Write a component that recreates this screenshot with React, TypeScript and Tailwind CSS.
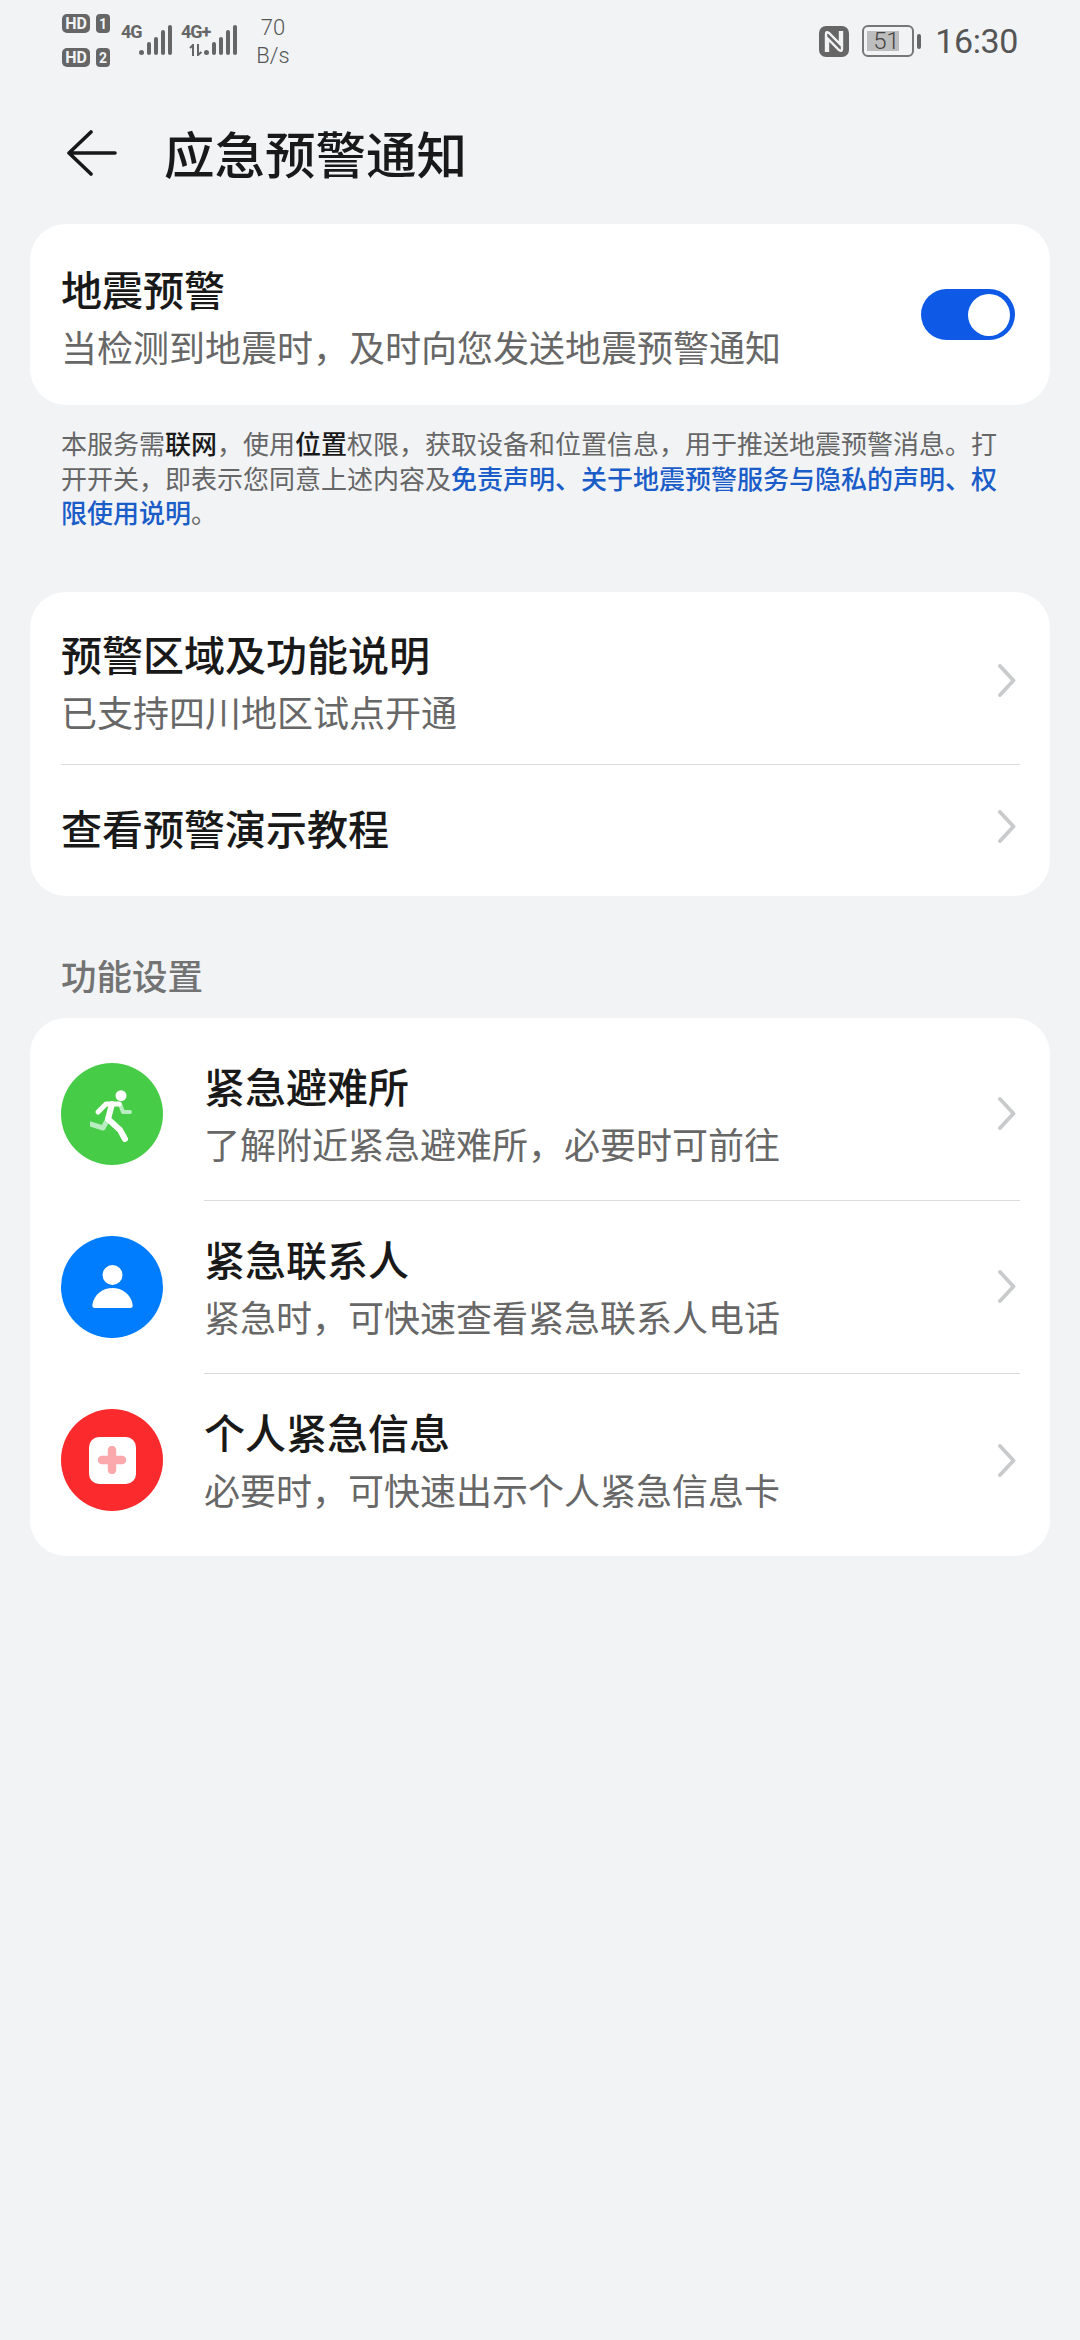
import React from 'react';

const cjk = 'font-["Noto_Sans_CJK_SC","Noto_Sans",sans-serif]';

function Chevron() {
  return (
    <svg width="18" height="33" viewBox="0 0 18 33" fill="none" className="mr-[4px] shrink-0">
      <path d="M2 2 L15.5 16.5 L2 31" stroke="#c9cacb" strokeWidth="3.8" strokeLinecap="round" strokeLinejoin="round" />
    </svg>
  );
}

function Bars() {
  return (
    <svg width="33" height="31" viewBox="0 0 33 31" fill="#666" className="mt-[4px] shrink-0">
      <circle cx="2.5" cy="27.5" r="2.5" />
      <rect x="8" y="17" width="4" height="13" rx="2" />
      <rect x="15" y="12" width="4" height="18" rx="2" />
      <rect x="22" y="5" width="4" height="25" rx="2" />
      <rect x="29" y="0" width="4" height="30" rx="2" />
    </svg>
  );
}

function SimBadge({ n }: { n: string }) {
  return (
    <div className="flex items-center gap-[6px]">
      <span className="flex h-[19px] w-[28px] items-center justify-center rounded-[5px] bg-[#666] font-['Roboto',sans-serif] text-[16px] leading-none font-bold text-[#f1f3f5]">HD</span>
      <span className="flex h-[19px] w-[14px] items-center justify-center rounded-[4px] bg-[#666] font-['Roboto',sans-serif] text-[14px] leading-none font-bold text-[#f1f3f5]">{n}</span>
    </div>
  );
}

function StatusBar() {
  return (
    <div className="flex h-[80px] items-start pr-[62px] pl-[62px] text-[#666]">
      <div className="mt-[14px] flex flex-col gap-[15px]">
        <SimBadge n="1" />
        <SimBadge n="2" />
      </div>
      <div className="mt-[21px] ml-[11px] flex items-start">
        <span className="mt-[1px] w-[18px] font-['Roboto',sans-serif] text-[18px] leading-[20px] font-bold tracking-[-1px] text-[#666]">4G</span>
        <Bars />
      </div>
      <div className="relative mt-[21px] ml-[9px] flex items-start">
        <span className="mt-[1px] w-[23px] font-['Roboto',sans-serif] text-[18px] leading-[20px] font-bold tracking-[-1px] whitespace-nowrap text-[#666]">4G+</span>
        <Bars />
        <svg width="14" height="12" viewBox="0 0 14 12" className="absolute top-[23px] left-[8px]" fill="none" stroke="#666" strokeWidth="2">
          <path d="M4 12V1L1 4" />
          <path d="M9 0V11L12.5 8" />
        </svg>
      </div>
      <div className="mt-[14px] ml-[19px] w-[34px] text-center font-['Roboto',sans-serif] text-[22px] leading-[28px] font-light text-[#555]">
        <div>70</div>
        <div>B/s</div>
      </div>
      <div className="ml-auto flex items-center pt-[24px]">
        <svg width="30" height="31" viewBox="0 0 30 31">
          <rect width="30" height="31" rx="7" fill="#666" />
          <path d="M7 26V8Q7 5 10 7L21 18V5M23 5V23Q23 26 20 24L9 13V26" fill="none" stroke="#f1f3f5" strokeWidth="2.4" />
        </svg>
        <div className="relative ml-[13px] h-[32px] w-[52px] rounded-[6px] border-[2.5px] border-[#777]">
          <div className="absolute top-[4px] bottom-[4px] left-[3px] w-[32px] bg-[#bdbdbd]" />
          <span className="absolute inset-y-0 left-[9px] flex items-center font-['Roboto',sans-serif] text-[24px] leading-none font-light tracking-[-0.5px] text-[#444]">51</span>
        </div>
        <div className="ml-[3px] h-[15px] w-[4px] rounded-[2px] bg-[#666]" />
        <span className="ml-[14px] font-['Roboto',sans-serif] text-[34px] leading-none tracking-[-0.4px] text-[#555]">16:30</span>
      </div>
    </div>
  );
}

function RunnerIcon() {
  return (
    <svg width="44" height="56" viewBox="2 -3 44 56" fill="none" strokeLinecap="round" strokeLinejoin="round">
      <path d="M2 35 L15 39 L20 30" stroke="#b7edc1" strokeWidth="5" />
      <path d="M32 15 L35 23 L42 23" stroke="#b7edc1" strokeWidth="4" />
      <circle cx="33" cy="6.7" r="5.5" fill="#fff" />
      <path d="M10 23 L18 15 L31 15" stroke="#fff" strokeWidth="5" />
      <path d="M24 15 L20 30 L32 41 L37 50" stroke="#fff" strokeWidth="6" />
    </svg>
  );
}

function PersonIcon() {
  return (
    <svg width="41" height="44" viewBox="0 0 41 44" fill="#fff">
      <circle cx="20.5" cy="10" r="10" />
      <path d="M3 43 Q0 43 0.3 40 C2 29 11 23 20.5 23 C30 23 39 29 40.7 40 Q41 43 38 43 Z" />
    </svg>
  );
}

function CrossIcon() {
  return (
    <div className="flex h-[47px] w-[47px] items-center justify-center rounded-[10px] bg-white">
      <svg width="28" height="28" viewBox="0 0 28 28">
        <path d="M14 4V24M4 14H24" stroke="#fba9ac" strokeWidth="8.5" strokeLinecap="round" />
      </svg>
    </div>
  );
}

const emergencyItems = [
  { title: '紧急避难所', desc: '了解附近紧急避难所，必要时可前往', color: 'bg-[#47cc47]', icon: <RunnerIcon /> },
  { title: '紧急联系人', desc: '紧急时，可快速查看紧急联系人电话', color: 'bg-[#007dff]', icon: <PersonIcon /> },
  { title: '个人紧急信息', desc: '必要时，可快速出示个人紧急信息卡', color: 'bg-[#fa2a2d]', icon: <CrossIcon /> },
];

export default function App() {
  return (
    <div className={`min-h-[2340px] w-[1080px] bg-[#f1f3f5] ${cjk}`}>
      <StatusBar />

      <header className="mt-[38px] flex h-[74px] items-center pl-[67px]">
        <svg width="50" height="46" viewBox="0 0 50 46" fill="none" stroke="#181818" strokeWidth="3.6" strokeLinecap="round" strokeLinejoin="round" className="mb-[5px]">
          <path d="M48 23H2M24 2L2 23L24 44" />
        </svg>
        <h1 className="mb-[6px] ml-[47px] text-[50.5px] leading-none font-medium text-[#191919]">应急预警通知</h1>
      </header>

      <main className="px-[30px] pt-[32px]">
        <section className="flex h-[181px] items-center justify-between rounded-[36px] bg-white pr-[35px] pl-[31px]">
          <div className="pt-[6px]">
            <div className="text-[41px] leading-[57px] font-medium text-[#191919]">地震预警</div>
            <div className="text-[36px] leading-[59px] text-[#676767]">当检测到地震时，及时向您发送地震预警通知</div>
          </div>
          <div className="flex h-[51px] w-[94px] items-center justify-end rounded-full bg-[#0e5ae6] pr-[5px]">
            <div className="h-[42px] w-[42px] rounded-full bg-white" />
          </div>
        </section>

        <p className="pt-[21px] pr-[32px] pl-[31px] text-[26px] leading-[34.5px] text-[#666]">
          本服务需<span className="font-medium text-[#191919]">联网</span>，使用<span className="font-medium text-[#191919]">位置</span>权限，获取设备和位置信息，用于推送地震预警消息。打开开关，即表示您同意上述内容及<span className="font-medium text-[#1a5cc8]">免责声明、关于地震预警服务与隐私的声明、权限使用说明</span>。
        </p>

        <section className="mt-[62px] rounded-[36px] bg-white pr-[30px] pl-[31px]">
          <div className="flex h-[173px] items-center justify-between border-b border-[#dcdcdc]">
            <div className="pt-[8px]">
              <div className="text-[41px] leading-[58px] font-medium text-[#191919]">预警区域及功能说明</div>
              <div className="text-[36px] leading-[58px] text-[#676767]">已支持四川地区试点开通</div>
            </div>
            <div className="pt-[5px]">
              <Chevron />
            </div>
          </div>
          <div className="flex h-[131px] items-center justify-between pb-[7px]">
            <div className="text-[41px] leading-[54px] font-medium text-[#191919]">查看预警演示教程</div>
            <Chevron />
          </div>
        </section>

        <h2 className="pt-[55px] pr-[32px] pb-[20px] pl-[31px] text-[35.5px] leading-[47px] font-medium text-[#737373]">功能设置</h2>

        <section className="rounded-[36px] bg-white pt-[10px] pr-[30px] pb-[9px] pl-[31px]">
          {emergencyItems.map((item, i) => (
            <div key={item.title} className="flex h-[173px] items-center">
              <div className={`flex h-[102px] w-[102px] shrink-0 items-center justify-center rounded-full ${item.color}`}>{item.icon}</div>
              <div className={`ml-[41px] flex h-full flex-1 items-center justify-between ${i < emergencyItems.length - 1 ? 'border-b border-[#dcdcdc]' : ''}`}>
                <div>
                  <div className="text-[41px] leading-[58px] font-medium text-[#191919]">{item.title}</div>
                  <div className="text-[36px] leading-[58px] text-[#676767]">{item.desc}</div>
                </div>
                <Chevron />
              </div>
            </div>
          ))}
        </section>
      </main>
    </div>
  );
}
